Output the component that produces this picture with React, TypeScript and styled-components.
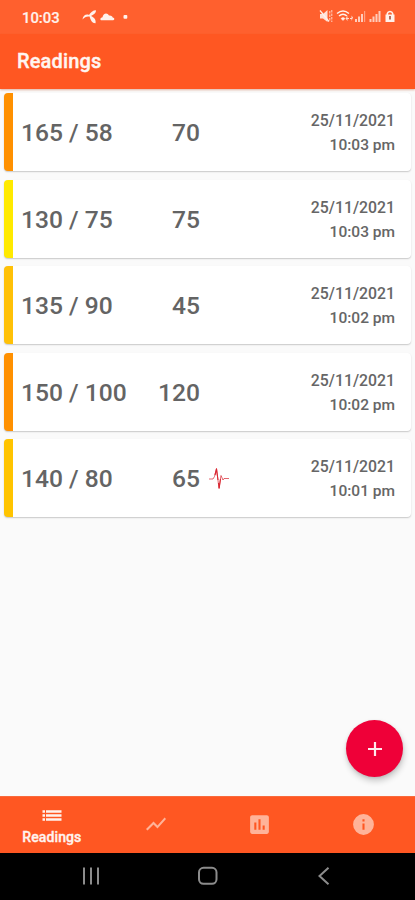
import React from "react";
import styled, { createGlobalStyle } from "styled-components";

const GlobalStyle = createGlobalStyle`
  * { box-sizing: border-box; }
  body { margin: 0; background: #fafafa; font-family: Roboto, sans-serif; }
`;

const Screen = styled.div`
  position: relative;
  display: flex;
  flex-direction: column;
  width: 415px;
  height: 900px;
  overflow: hidden;
  background: #fafafa;
`;

const StatusBar = styled.div`
  display: flex;
  align-items: center;
  justify-content: space-between;
  height: 34px;
  padding: 0 18px 0 22px;
  background: #ff602e;
  color: #fff1eb;
`;

const Clock = styled.span`
  width: 60px;
  font-size: 14.8px;
  font-weight: 500;
  line-height: 34px;
  padding-top: 1px;
  -webkit-text-stroke: 0.2px #fff1eb;
`;

const StatusGroup = styled.div`
  display: flex;
  align-items: center;
`;

const AppBar = styled.header`
  display: flex;
  align-items: center;
  height: 54.5px;
  padding: 0 17px;
  background: #ff5722;
  box-shadow: 0 1px 2px rgba(190, 70, 30, 0.4);
`;

const Title = styled.h1`
  margin: 0;
  color: #fff5f0;
  font-size: 20px;
  font-weight: 500;
  line-height: 24px;
  letter-spacing: 0.15px;
  -webkit-text-stroke: 0.4px #fff5f0;
`;

const List = styled.main`
  flex: 1;
  display: flex;
  flex-direction: column;
  gap: 8.6px;
  padding: 4.6px 4px 0;
`;

const Card = styled.article<{ $level: string }>`
  display: grid;
  grid-template-columns: 127px 61px 36px 1fr;
  align-items: center;
  height: 78px;
  padding: 0 16px 0 8px;
  border-left: 9px solid ${(p) => p.$level};
  border-radius: 4px;
  background: #fff;
  box-shadow: 0 1px 1.5px rgba(0, 0, 0, 0.2);
  color: #646464;
`;

const Value = styled.span<{ $end?: boolean }>`
  padding-top: 2px;
  font-size: 24.6px;
  font-weight: 500;
  line-height: 30px;
  white-space: nowrap;
  text-align: ${(p) => (p.$end ? "right" : "left")};
  ${(p) => p.$end && "margin-left: -10px; margin-right: 9px;"}
`;

const PulseMark = styled.span`
  display: flex;
  padding-top: 1px;
`;

const Stamp = styled.div`
  padding-top: 2px;
  text-align: right;
  font-size: 15.8px;
  font-weight: 500;
  line-height: 25px;
  color: #666;
`;

const Time = styled.div`
  font-size: 15.5px;
`;

const Fab = styled.button`
  position: absolute;
  right: 12px;
  bottom: 123px;
  display: grid;
  place-items: center;
  width: 57px;
  height: 57px;
  padding: 0;
  border: 0;
  border-radius: 50%;
  background: #ef0038;
  box-shadow: 1px 4px 6px rgba(0, 0, 0, 0.2), 0 1px 3px rgba(0, 0, 0, 0.1);
`;

const Tabs = styled.nav`
  display: grid;
  grid-template-columns: repeat(4, 1fr);
  height: 57px;
  background: #ff5722;
  border-top: 1px solid #f96a3c;
`;

const Tab = styled.div<{ $active?: boolean }>`
  display: flex;
  flex-direction: column;
  align-items: center;
  justify-content: ${(p) => (p.$active ? "flex-start" : "center")};
  padding: ${(p) => (p.$active ? "9px 0 0" : "0 0 2px")};
  color: ${(p) => (p.$active ? "#fff3ee" : "#ffb399")};
`;

const TabLabel = styled.span`
  margin-top: 2px;
  font-size: 14.1px;
  font-weight: 500;
  line-height: 19px;
  letter-spacing: 0.05px;
  -webkit-text-stroke: 0.35px #fff3ee;
`;

const SystemNav = styled.footer`
  display: flex;
  align-items: center;
  justify-content: space-between;
  height: 47px;
  padding: 0 80px 1px;
  background: #000;
`;

const readings = [
  { bp: "165 / 58", pulse: "70", time: "10:03 pm", level: "#ff9000" },
  { bp: "130 / 75", pulse: "75", time: "10:03 pm", level: "#ffea00" },
  { bp: "135 / 90", pulse: "45", time: "10:02 pm", level: "#ffc107" },
  { bp: "150 / 100", pulse: "120", time: "10:02 pm", level: "#ff9000" },
  { bp: "140 / 80", pulse: "65", time: "10:01 pm", level: "#ffc400", irregular: true },
];

const Notifications = () => (
  <svg width="48" height="20" viewBox="0 0 48 20" fill="currentColor">
    <path d="M0.5 12.5C1 8.5 4 6.8 7 8C8.4 5.3 11 3.2 14 3.2C14.3 5.7 12 7.4 9 8.9C12 10 14.4 12.8 13.5 16.2C10.2 16.4 8.5 13 7.6 9.5C5 9 2.5 10 .5 12.5Z" />
    <path d="M19.5 13.2C17.8 13.2 18 10.6 20.5 10.2C21 6.2 25.4 5 27 8.6C29.6 8.4 30.4 9.6 30.7 10.6C32.9 10.8 32.7 13.2 31.2 13.2Z" />
    <rect x="41.5" y="8" width="3.8" height="3.8" rx="1" />
  </svg>
);

const Signals = () => (
  <svg width="78" height="20" viewBox="0 0 78 20" fill="currentColor">
    <path d="M1 7H4L8.5 3V15L4 11.5H1Z" opacity=".9" />
    <path d="M1 3.5L10 14.5" stroke="currentColor" strokeWidth="1.2" />
    <path d="M10.8 4V14M12.8 3V15" stroke="currentColor" strokeWidth="1" strokeDasharray="2.5 1" opacity=".8" />
    <g fill="none" stroke="currentColor" strokeWidth="1.5">
      <path d="M18 6.5Q24 1.5 30 6.5M20 9Q24 5.5 28 9" />
      <path d="M22 11.5Q24 9.5 26 11.5L24 13.5Z" fill="currentColor" strokeWidth=".5" />
    </g>
    <path d="M26.5 11.5L28.5 9V11H30V12H28.5V14ZM32.5 8.5V11H31V12H32.5V14L34 10.5Z" opacity=".85" />
    <g opacity=".75">
      <path d="M36 12H38V15H36ZM39 9.5H41V15H39ZM42 7H44V15H42Z" />
      <path d="M45 4H46.2V15H45Z" opacity=".6" />
      <path d="M50.5 12H52.5V15H50.5ZM53.5 9.5H55.5V15H53.5ZM56.5 7H58.5V15H56.5ZM59.5 4H61.5V15H59.5Z" />
    </g>
    <path d="M68.3 8V6.5A2.8 2.8 0 0 1 73.7 6.5V8" fill="none" stroke="currentColor" strokeWidth="1.5" />
    <path d="M66.5 7.5H75.5V15H66.5Z" />
    <path d="M70.2 9H71.8V12.5H70.2Z" fill="#a34a3a" />
  </svg>
);

const Heartbeat = () => (
  <svg width="22" height="26" viewBox="0 0 22 26" fill="none" stroke="#d92732" strokeLinejoin="round">
    <path d="M0 13H4L5.5 10.5L7.5 2.5L10 22.5L12 9.5L14 14L15 12.5H20" strokeWidth=".7" />
    <path d="M6 9L7.5 3L9 14M9.5 17L10.2 22L11.5 13" strokeWidth="1.1" />
  </svg>
);

const ListIcon = () => (
  <svg width="20" height="20" viewBox="0 0 20 20" fill="currentColor">
    <path d="M.5 4.3H3V6.7H.5ZM4 4.3H19.5V6.7H4ZM.5 8.3H3V10.7H.5ZM4 8.3H19.5V10.7H4ZM.5 12.3H3V14.7H.5ZM4 12.3H19.5V14.7H4Z" />
  </svg>
);

const TrendIcon = () => (
  <svg width="24" height="24" viewBox="0 0 24 24" fill="currentColor">
    <path d="M3.5 18.5L9.5 12.5L13.5 16.5L22 6.9L20.6 5.5L13.5 13.5L9.5 9.5L2 17Z" />
  </svg>
);

const ChartIcon = () => (
  <svg width="25" height="25" viewBox="0 0 24 24" fill="currentColor">
    <path d="M19 3H5C3.9 3 3 3.9 3 5V19C3 20.1 3.9 21 5 21H19C20.1 21 21 20.1 21 19V5C21 3.9 20.1 3 19 3ZM9 17H7V10H9ZM13 17H11V7H13ZM17 17H15V13H17Z" />
  </svg>
);

const InfoIcon = () => (
  <svg width="25" height="25" viewBox="0 0 24 24" fill="currentColor">
    <path d="M12 2A10 10 0 1 0 12 22A10 10 0 1 0 12 2ZM13 17H11V11H13ZM13 9H11V7H13Z" />
  </svg>
);

export default function App() {
  return (
    <Screen>
      <GlobalStyle />
      <StatusBar>
        <StatusGroup>
          <Clock>10:03</Clock>
          <Notifications />
        </StatusGroup>
        <Signals />
      </StatusBar>
      <AppBar>
        <Title>Readings</Title>
      </AppBar>
      <List>
        {readings.map((r) => (
          <Card key={r.bp} $level={r.level}>
            <Value>{r.bp}</Value>
            <Value $end>{r.pulse}</Value>
            <PulseMark>{r.irregular && <Heartbeat />}</PulseMark>
            <Stamp>
              <div>25/11/2021</div>
              <Time>{r.time}</Time>
            </Stamp>
          </Card>
        ))}
      </List>
      <Tabs>
        <Tab $active>
          <ListIcon />
          <TabLabel>Readings</TabLabel>
        </Tab>
        <Tab><TrendIcon /></Tab>
        <Tab><ChartIcon /></Tab>
        <Tab><InfoIcon /></Tab>
      </Tabs>
      <SystemNav>
        <svg width="22" height="22" viewBox="0 0 22 22" stroke="#8c8c8c" strokeWidth="2">
          <path d="M4 2.5V19.5M11 2.5V19.5M18 2.5V19.5" />
        </svg>
        <svg width="22" height="22" viewBox="0 0 22 22" fill="none" stroke="#8c8c8c" strokeWidth="2">
          <rect x="2" y="2.8" width="17.5" height="16" rx="4.5" />
        </svg>
        <svg width="22" height="22" viewBox="0 0 22 22" fill="none" stroke="#8c8c8c" strokeWidth="2">
          <path d="M15.5 2.8L6.5 11L15.5 19.2" />
        </svg>
      </SystemNav>
      <Fab aria-label="Add reading">
        <svg width="16" height="16" viewBox="0 0 16 16" stroke="#ffe8ec" strokeWidth="2.2">
          <path d="M8 1V15M1 8H15" />
        </svg>
      </Fab>
    </Screen>
  );
}
